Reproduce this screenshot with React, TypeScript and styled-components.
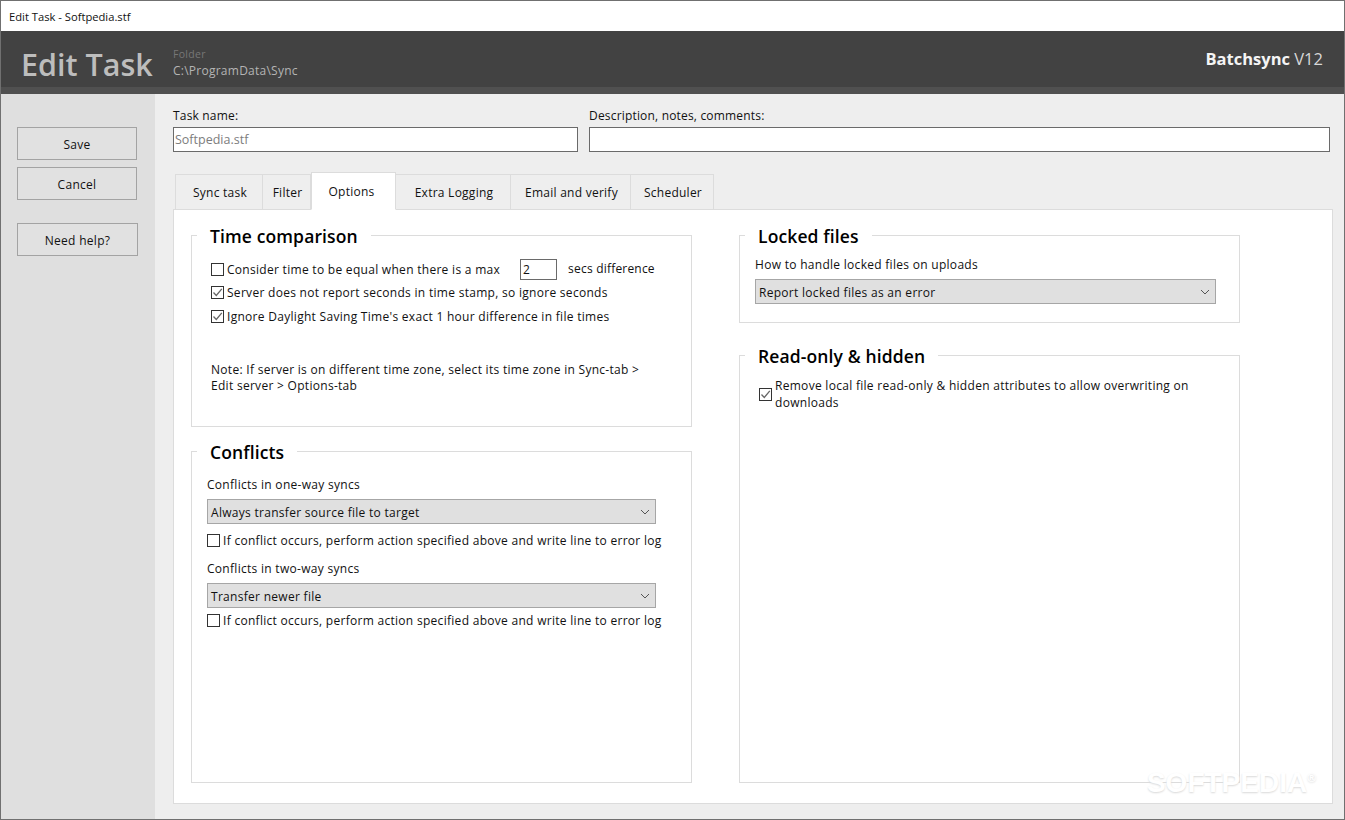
import React from "react";
import styled, { createGlobalStyle } from "styled-components";

const UI_FONT = `"Open Sans", "Noto Sans", "Liberation Sans", sans-serif`;

const Global = createGlobalStyle`
  html, body {
    margin: 0;
    padding: 0;
    background: #eeeeee;
    overflow: hidden;
  }
  * {
    box-sizing: border-box;
  }
`;

const CheckBox = ({ checked }: { checked?: boolean }) => (
  <BoxFrame>
    {checked && (
      <svg width="11" height="11" viewBox="0 0 11 11" fill="none">
        <path d="M1.5 5.5 L4.3 8.5 L9.8 1.8" stroke="#666666" strokeWidth="1.3" />
      </svg>
    )}
  </BoxFrame>
);

const Chevron = () => (
  <svg width="10" height="6" viewBox="0 0 10 6" fill="none">
    <path d="M1 1 L5 5 L9 1" stroke="#555555" strokeWidth="1" />
  </svg>
);

const Dropdown = ({ value, width }: { value: string; width: number }) => (
  <SelectBox $width={width}>
    <SelectText>{value}</SelectText>
    <Chevron />
  </SelectBox>
);

const tabs = ["Sync task", "Filter", "Options", "Extra Logging", "Email and verify", "Scheduler"];
const tabWidths = [88, 48, 85, 115, 120, 83];

const App = () => {
  return (
    <Win>
      <Global />
      <TitleBar>Edit Task - Softpedia.stf</TitleBar>
      <Header>
        <HeaderTitle>Edit Task</HeaderTitle>
        <FolderInfo>
          <FolderLabel>Folder</FolderLabel>
          <FolderPath>C:\ProgramData\Sync</FolderPath>
        </FolderInfo>
        <Brand>
          <b>Batchsync</b> V12
        </Brand>
      </Header>
      <Body>
        <Sidebar>
          <SideButton>Save</SideButton>
          <SideButton>Cancel</SideButton>
          <SideButton $top={16} $width={121}>
            Need help?
          </SideButton>
        </Sidebar>
        <Main>
          <FieldRow>
            <Field $width={405}>
              <FieldLabel>Task name:</FieldLabel>
              <TextBox $muted>Softpedia.stf</TextBox>
            </Field>
            <Field $width={741}>
              <FieldLabel>Description, notes, comments:</FieldLabel>
              <TextBox />
            </Field>
          </FieldRow>
          <TabBar>
            {tabs.map((t, i) => (
              <Tab key={t} $active={t === "Options"} $width={tabWidths[i]}>
                {t}
              </Tab>
            ))}
          </TabBar>
          <Panel>
            <Column>
              <Group $height={192} $pad={19}>
                <Legend $shift={-14}>Time comparison</Legend>
                <OptionRow $top={-1}>
                  <CheckBox />
                  <span>Consider time to be equal when there is a max</span>
                  <NumberBox>2</NumberBox>
                  <SecsLabel>secs difference</SecsLabel>
                </OptionRow>
                <OptionRow $top={4}>
                  <CheckBox checked />
                  <span>Server does not report seconds in time stamp, so ignore seconds</span>
                </OptionRow>
                <OptionRow $top={7}>
                  <CheckBox checked />
                  <span>Ignore Daylight Saving Time's exact 1 hour difference in file times</span>
                </OptionRow>
                <Note>
                  Note: If server is on different time zone, select its time zone in Sync-tab &gt;
                  <br />
                  Edit server &gt; Options-tab
                </Note>
              </Group>
              <Group $height={332} $pad={15}>
                <Legend $shift={-10}>Conflicts</Legend>
                <Caption $top={2}>Conflicts in one-way syncs</Caption>
                <Dropdown value="Always transfer source file to target" width={449} />
                <OptionRow $top={8}>
                  <CheckBox />
                  <span>If conflict occurs, perform action specified above and write line to error log</span>
                </OptionRow>
                <Caption $top={11}>Conflicts in two-way syncs</Caption>
                <Dropdown value="Transfer newer file" width={449} />
                <OptionRow $top={4}>
                  <CheckBox />
                  <span>If conflict occurs, perform action specified above and write line to error log</span>
                </OptionRow>
              </Group>
            </Column>
            <Column $gap={32}>
              <Group $height={88} $pad={15}>
                <Legend $shift={-10}>Locked files</Legend>
                <Caption $top={-4}>How to handle locked files on uploads</Caption>
                <Dropdown value="Report locked files as an error" width={461} />
              </Group>
              <Group $height={428} $pad={19}>
                <Legend $shift={-14}>Read-only &amp; hidden</Legend>
                <WrapRow>
                  <CheckBox checked />
                  <span>Remove local file read-only &amp; hidden attributes to allow overwriting on downloads</span>
                </WrapRow>
              </Group>
            </Column>
          </Panel>
        </Main>
      </Body>
      <Watermark>
        SOFTPEDIA<sup>®</sup>
      </Watermark>
    </Win>
  );
};
export default App;

const Win = styled.div`
  position: relative;
  display: flex;
  flex-direction: column;
  width: 1345px;
  height: 820px;
  border: 1px solid #707070;
  font-family: ${UI_FONT};
  font-size: 12px;
  letter-spacing: 0.29px;
  color: #111111;
`;
const TitleBar = styled.div`
  height: 30px;
  flex: none;
  display: flex;
  align-items: center;
  padding-left: 8px;
  background: #ffffff;
  font-size: 11.2px;
  letter-spacing: 0;
  color: #111111;
`;
const Header = styled.div`
  height: 63px;
  flex: none;
  display: flex;
  align-items: flex-start;
  background: #424242;
  border-bottom: 7px solid #505050;
  letter-spacing: 0;
`;
const HeaderTitle = styled.div`
  margin: 11px 0 0 20px;
  width: 152px;
  font-size: 30.5px;
  line-height: 44px;
  font-weight: 600;
  color: #bdbdbd;
`;
const FolderInfo = styled.div`
  margin-top: 15px;
`;
const FolderLabel = styled.div`
  font-size: 10.5px;
  line-height: 16px;
  letter-spacing: 0.3px;
  color: #777777;
`;
const FolderPath = styled.div`
  font-size: 12px;
  line-height: 17px;
  letter-spacing: 0.25px;
  color: #b4b4b4;
`;
const Brand = styled.div`
  margin: 17px 21px 0 auto;
  font-size: 16.5px;
  line-height: 22px;
  color: #d8d8d8;
  b {
    font-weight: 700;
    color: #f4f4f4;
  }
`;
const Body = styled.div`
  flex: 1;
  min-height: 0;
  display: flex;
`;
const Sidebar = styled.div`
  width: 154px;
  flex: none;
  display: flex;
  flex-direction: column;
  gap: 7px;
  padding: 33px 0 0 16px;
  background: #dfdfdf;
`;
const SideButton = styled.div<{ $top?: number; $width?: number }>`
  width: ${(p) => p.$width ?? 120}px;
  height: 33px;
  margin-top: ${(p) => p.$top ?? 0}px;
  padding-top: 1px;
  display: flex;
  align-items: center;
  justify-content: center;
  border: 1px solid #a3a3a3;
  background: #e1e1e1;
  font-size: 12px;
`;
const Main = styled.div`
  flex: 1;
  min-width: 0;
  padding: 14px 11px 0 18px;
  display: flex;
  flex-direction: column;
`;
const FieldRow = styled.div`
  display: flex;
  gap: 11px;
`;
const Field = styled.div<{ $width: number }>`
  width: ${(p) => p.$width}px;
`;
const FieldLabel = styled.div`
  height: 19px;
  font-size: 12px;
  line-height: 16px;
  letter-spacing: 0.18px;
`;
const TextBox = styled.div<{ $muted?: boolean }>`
  height: 25px;
  padding-left: 1px;
  display: flex;
  align-items: center;
  border: 1px solid #6a6a6a;
  background: #ffffff;
  color: ${(p) => (p.$muted ? "#7d7d7d" : "#111111")};
  font-size: 12.5px;
  letter-spacing: 0;
`;
const TabBar = styled.div`
  display: flex;
  align-items: flex-end;
  height: 36px;
  margin-top: 22px;
  padding-left: 2px;
  position: relative;
  z-index: 1;
  margin-bottom: -1px;
`;
const Tab = styled.div<{ $active?: boolean; $width: number }>`
  width: ${(p) => p.$width}px;
  height: ${(p) => (p.$active ? 38 : 36)}px;
  display: flex;
  align-items: center;
  justify-content: center;
  border: 1px solid #dcdcdc;
  border-left-width: ${(p) => (p.$active ? 1 : 0)}px;
  border-bottom-color: ${(p) => (p.$active ? "#ffffff" : "#dcdcdc")};
  background: ${(p) => (p.$active ? "#ffffff" : "#eeeeee")};
  font-size: 12px;
  letter-spacing: 0.25px;
  padding: ${(p) => (p.$active ? "0 4px 0 0" : "1px 0 0 2px")};
  &:first-child {
    border-left-width: 1px;
  }
`;
const Panel = styled.div`
  flex: none;
  height: 595px;
  display: grid;
  grid-template-columns: 501px 501px;
  column-gap: 47px;
  align-content: start;
  padding: 25px 0 0 17px;
  border: 1px solid #dcdcdc;
  background: #ffffff;
`;
const Column = styled.div<{ $gap?: number }>`
  display: flex;
  flex-direction: column;
  gap: ${(p) => p.$gap ?? 24}px;
`;
const Group = styled.div<{ $height: number; $pad: number }>`
  height: ${(p) => p.$height}px;
  padding: 0 10px 0 ${(p) => p.$pad}px;
  border: 1px solid #dcdcdc;
`;
const Legend = styled.div<{ $shift: number }>`
  width: fit-content;
  height: 24px;
  margin: -12px 0 12px ${(p) => p.$shift}px;
  padding: 0 13px;
  background: #ffffff;
  font-size: 17.5px;
  line-height: 24px;
  font-weight: 600;
  letter-spacing: 0.12px;
  color: #000000;
`;
const BoxFrame = styled.span`
  width: 13px;
  height: 13px;
  flex: none;
  display: inline-flex;
  align-items: center;
  justify-content: center;
  border: 1px solid #333333;
  background: #ffffff;
`;
const OptionRow = styled.div<{ $top: number }>`
  display: flex;
  align-items: center;
  gap: 3px;
  min-height: 17px;
  margin-top: ${(p) => p.$top}px;
  white-space: nowrap;
`;
const WrapRow = styled.div`
  display: flex;
  align-items: center;
  gap: 3px;
  width: 440px;
  margin-top: -3px;
  line-height: 17px;
`;
const NumberBox = styled.div`
  width: 37px;
  height: 21px;
  margin-left: 17px;
  padding-left: 2px;
  display: flex;
  align-items: center;
  border: 1px solid #6a6a6a;
`;
const SecsLabel = styled.span`
  margin: -3px 0 0 8px;
  letter-spacing: 0.2px;
`;
const Note = styled.div`
  margin-top: 37px;
  line-height: 16px;
`;
const Caption = styled.div<{ $top: number }>`
  margin-top: ${(p) => p.$top}px;
  height: 17px;
  line-height: 17px;
  margin-bottom: 6px;
`;
const SelectBox = styled.div<{ $width: number }>`
  width: ${(p) => p.$width}px;
  height: 25px;
  padding: 0 5px 0 3px;
  display: flex;
  align-items: center;
  justify-content: space-between;
  border: 1px solid #a6a6a6;
  background: #e0e0e0;
  font-size: 12px;
`;
const SelectText = styled.span`
  padding-top: 2px;
`;
const Watermark = styled.div`
  position: absolute;
  right: 28px;
  bottom: 20px;
  font-family: "Liberation Sans", sans-serif;
  font-size: 28px;
  font-weight: 700;
  letter-spacing: 0;
  color: #ffffff;
  text-shadow: 0 1px 2px #d9d9d9;
  sup {
    font-size: 12px;
  }
`;
